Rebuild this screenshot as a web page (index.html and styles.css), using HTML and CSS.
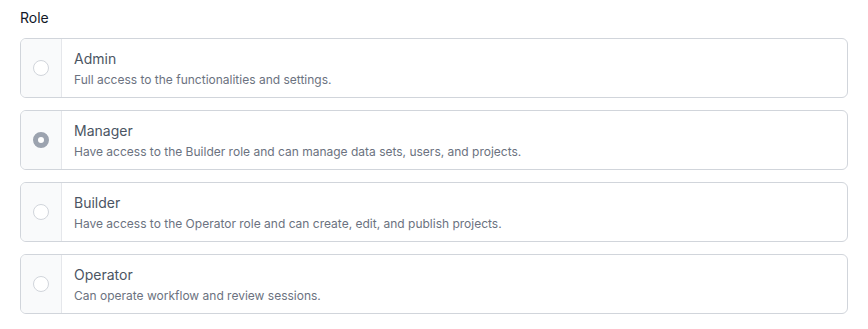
FILE: index.html
```html
<!DOCTYPE html>
<html lang="en">
<head>
    <meta charset="UTF-8">
    <title>Role</title>
    <link rel="stylesheet" href="styles.css">
</head>
<body>
<div class="field">
    <div class="label">Role</div>
    <div class="options">
        <label class="option">
            <span class="option-check"><span class="radio"></span></span>
            <span class="option-body">
                <span class="option-title">Admin</span>
                <span class="option-desc">Full access to the functionalities and settings.</span>
            </span>
        </label>
        <label class="option">
            <span class="option-check"><span class="radio checked"></span></span>
            <span class="option-body">
                <span class="option-title">Manager</span>
                <span class="option-desc">Have access to the Builder role and can manage data sets, users, and projects.</span>
            </span>
        </label>
        <label class="option">
            <span class="option-check"><span class="radio"></span></span>
            <span class="option-body">
                <span class="option-title">Builder</span>
                <span class="option-desc">Have access to the Operator role and can create, edit, and publish projects.</span>
            </span>
        </label>
        <label class="option">
            <span class="option-check"><span class="radio"></span></span>
            <span class="option-body">
                <span class="option-title">Operator</span>
                <span class="option-desc">Can operate workflow and review sessions.</span>
            </span>
        </label>
    </div>
</div>
</body>
</html>
```

FILE: styles.css
```css
body {
    margin: 0;
    padding: 8px 20px;

    font-family: Inter, "Noto Sans", sans-serif;
    background-color: #ffffff;
}

.label {
    font-size: 14px;
    line-height: 20px;

    margin-bottom: 10px;

    color: #111827;
}

.options {
    display: flex;
    flex-direction: column;
    gap: 12px;
}

.option {
    display: flex;
    overflow: hidden;

    height: 60px;
    box-sizing: border-box;

    cursor: pointer;

    border: 1px solid #d1d5db;
    border-radius: 6px;
}

.option-check {
    display: flex;
    align-items: center;
    justify-content: center;

    width: 40px;
    flex-shrink: 0;

    border-right: 1px solid #e5e7eb;
    background-color: #f9fafb;
}

.radio {
    width: 14px;
    height: 14px;

    border: 1px solid #d1d5db;
    border-radius: 50%;
    background-color: #ffffff;
}

.radio.checked {
    width: 6px;
    height: 6px;

    border: 5px solid #9ca3af;
}

.option-body {
    display: flex;
    flex-direction: column;
    justify-content: center;

    padding: 0 12px;
}

.option-title {
    font-size: 14px;
    line-height: 20px;

    color: #4b5563;
}

.option-desc {
    font-size: 12px;
    line-height: 17px;

    margin-top: 2px;

    color: #6b7280;
}
```
